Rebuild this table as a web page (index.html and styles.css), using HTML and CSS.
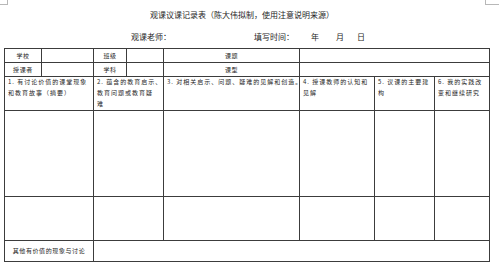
FILE: index.html
```html
<!DOCTYPE html>
<html lang="zh-CN">
<head>
<meta charset="utf-8">
<title>观课议课记录表</title>
<link rel="stylesheet" href="styles.css">
</head>
<body>
<div class="mark mark-left"></div>
<div class="mark mark-right"></div>
<div class="page">
  <div class="title">观课议课记录表（陈大伟拟制，使用注意说明来源）</div>
  <div class="meta">
    <span class="m-teacher">观课老师：</span>
    <span class="m-time">填写时间：</span>
    <span class="m-year">年</span>
    <span class="m-month">月</span>
    <span class="m-day">日</span>
  </div>
  <table class="sheet">
    <colgroup>
      <col class="c1"><col class="c2"><col class="c3"><col class="c4">
      <col class="c5"><col class="c6"><col class="c7"><col class="c8">
    </colgroup>
    <tr class="r-info">
      <td class="lbl">学校</td><td></td>
      <td class="lbl">班级</td><td></td>
      <td class="lbl">课题</td><td colspan="3"></td>
    </tr>
    <tr class="r-info">
      <td class="lbl">授课者</td><td></td>
      <td class="lbl">学科</td><td></td>
      <td class="lbl">课型</td><td colspan="3"></td>
    </tr>
    <tr class="r-head">
      <td colspan="2" class="hd">1. 有讨论价值的课堂现象<br>和教育故事（摘要）</td>
      <td colspan="2" class="hd">2. 蕴含的教育启示、<br>教育问题或教育疑<br>难</td>
      <td class="hd">3. 对相关启示、问题、疑难的见解和创造。</td>
      <td class="hd">4. 授课教师的认知和<br>见解</td>
      <td class="hd">5. 议课的主要建<br>构</td>
      <td class="hd">6. 我的实践改<br>变和继续研究</td>
    </tr>
    <tr class="r-big">
      <td colspan="2"></td><td colspan="2"></td><td></td><td></td><td></td><td></td>
    </tr>
    <tr class="r-mid">
      <td colspan="2"></td><td colspan="2"></td><td></td><td></td><td></td><td></td>
    </tr>
    <tr class="r-foot">
      <td colspan="2" class="lbl">其他有价值的现象与讨论</td>
      <td colspan="6"></td>
    </tr>
  </table>
</div>
</body>
</html>
```

FILE: styles.css
```css
html, body {
  margin: 0;
  padding: 0;
  background: #ffffff;
}

body {
  font-family: "Noto Sans CJK SC", "Noto Sans", sans-serif;
  color: #1e1e1e;
  position: relative;
  width: 500px;
  height: 269px;
  overflow: hidden;
}

.mark {
  position: absolute;
  top: 0;
  height: 4px;
  border-bottom: 1px solid #b8b8b8;
}

.mark-left {
  left: 0;
  width: 7px;
  border-right: 1px solid #b8b8b8;
}

.mark-right {
  left: 485px;
  width: 13px;
  border-left: 1px solid #b8b8b8;
}

.page {
  padding: 9px 0 0 4px;
}

.title {
  margin-left: 146px;
  font-size: 8px;
  line-height: 12px;
  white-space: nowrap;
}

.meta {
  display: flex;
  margin-top: 10px;
  font-size: 8px;
  line-height: 12px;
  white-space: nowrap;
}

.m-teacher { margin-left: 127px; }
.m-time { margin-left: 83px; }
.m-year { margin-left: 17px; }
.m-month { margin-left: 17px; }
.m-day { margin-left: 13px; }

.sheet {
  margin-top: 5px;
  border-collapse: collapse;
  table-layout: fixed;
  width: 485px;
}

.sheet td {
  border: 1px solid #3c3c3c;
  padding: 0;
  vertical-align: top;
}

.c1 { width: 37px; }
.c2 { width: 52px; }
.c3 { width: 33px; }
.c4 { width: 37px; }
.c5 { width: 136px; }
.c6 { width: 75px; }
.c7 { width: 60px; }
.c8 { width: 55px; }

.r-info td { height: 13px; }
.r-head td { height: 33px; }
.r-big td { height: 85px; }
.r-mid td { height: 43px; }
.r-foot td { height: 20px; }

.sheet td.lbl {
  text-align: center;
  vertical-align: middle;
  font-size: 6px;
  letter-spacing: 0.6px;
  line-height: 8px;
  white-space: nowrap;
}

.sheet td.hd {
  padding: 0 2px 0 3px;
  font-size: 6px;
  letter-spacing: 1px;
  line-height: 10.8px;
  white-space: nowrap;
}
```
